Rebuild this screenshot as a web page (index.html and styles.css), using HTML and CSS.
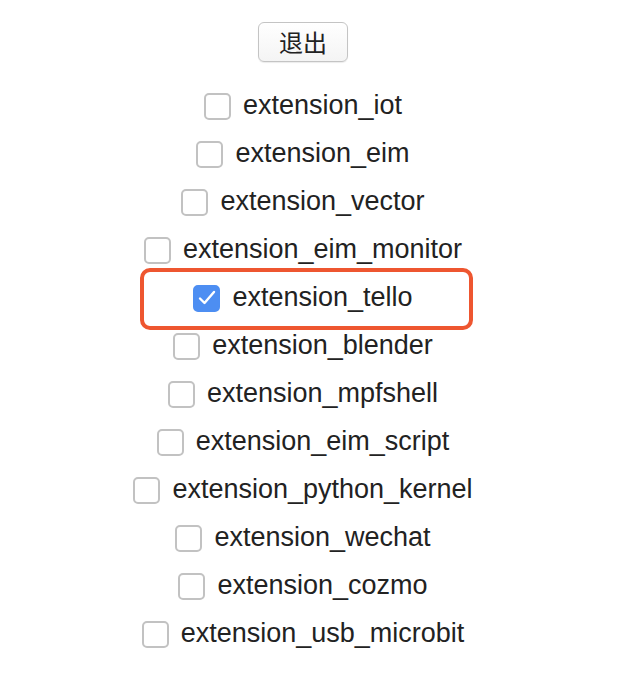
FILE: index.html
```html
<!DOCTYPE html>
<html>
<head>
<meta charset="utf-8">
<link rel="stylesheet" href="styles.css">
</head>
<body>
<div class="page">
  <button class="exit">退出</button>
  <ul class="list">
    <li class="row"><span class="box"></span><span class="label">extension_iot</span></li>
    <li class="row"><span class="box"></span><span class="label">extension_eim</span></li>
    <li class="row"><span class="box"></span><span class="label">extension_vector</span></li>
    <li class="row"><span class="box"></span><span class="label">extension_eim_monitor</span></li>
    <li class="row row-marked"><span class="box box-checked"><svg class="tick" width="20" height="18" viewBox="0 0 20 18"><path d="M3 9.5 L7.5 14 L17 3" fill="none" stroke="#fff" stroke-width="2.4" stroke-linecap="round" stroke-linejoin="round"/></svg></span><span class="label">extension_tello</span></li>
    <li class="row"><span class="box"></span><span class="label">extension_blender</span></li>
    <li class="row"><span class="box"></span><span class="label">extension_mpfshell</span></li>
    <li class="row"><span class="box"></span><span class="label">extension_eim_script</span></li>
    <li class="row"><span class="box"></span><span class="label">extension_python_kernel</span></li>
    <li class="row"><span class="box"></span><span class="label">extension_wechat</span></li>
    <li class="row"><span class="box"></span><span class="label">extension_cozmo</span></li>
    <li class="row"><span class="box"></span><span class="label">extension_usb_microbit</span></li>
  </ul>
</div>
</body>
</html>
```
FILE: styles.css
```css
html, body {
  margin: 0;
  padding: 0;
  background: #fff;
}
body {
  font-family: "Liberation Sans", Arial, sans-serif;
  color: #222;
}
.page {
  width: 606px;
  padding-top: 22px;
  display: flex;
  flex-direction: column;
  align-items: center;
}
.exit {
  width: 90px;
  height: 40px;
  margin: 0;
  padding: 0;
  font-family: "Noto Sans CJK SC", "Liberation Sans", sans-serif;
  font-size: 24px;
  line-height: 1;
  color: #222;
  background: linear-gradient(#ffffff, #f4f4f4);
  border: 1.5px solid #c4c4c4;
  border-radius: 6px;
  box-shadow: 0 1px 1px rgba(0,0,0,0.08);
}
.list {
  list-style: none;
  margin: 20px 0 0 0;
  padding: 0;
  display: flex;
  flex-direction: column;
  align-items: center;
}
.row {
  height: 48px;
  display: flex;
  align-items: center;
  justify-content: center;
  gap: 12px;
}
.row-marked {
  position: relative;
}
.row-marked::before {
  content: "";
  position: absolute;
  left: -53px;
  right: -60px;
  top: -6px;
  bottom: -8px;
  border: 4px solid #ee5630;
  border-radius: 10px;
}
.box {
  width: 23px;
  height: 23px;
  border: 2px solid #c2c2c2;
  border-radius: 5px;
  background: #fff;
  display: flex;
  align-items: center;
  justify-content: center;
  flex: none;
}
.box-checked {
  background: #4d8ef2;
  border-color: #4d8ef2;
}
.tick {
  flex: none;
  display: block;
}
.label {
  font-size: 27px;
  line-height: 1;
  position: relative;
  top: -1px;
}
```
